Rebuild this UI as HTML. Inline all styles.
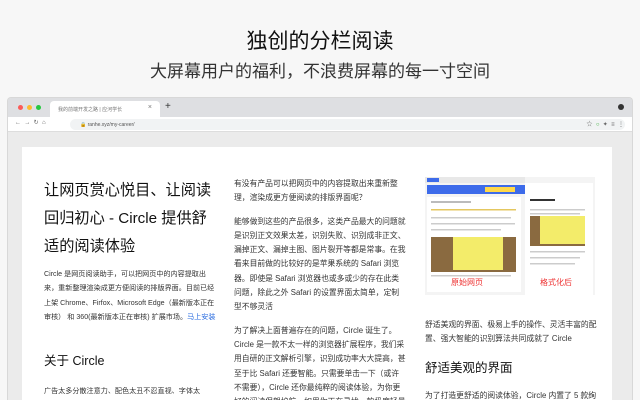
<!DOCTYPE html>
<html><head><meta charset="utf-8"><style>
*{margin:0;padding:0;box-sizing:border-box}
body{width:640px;height:400px;overflow:hidden;background:#f7f7f7;font-family:"Liberation Sans","Noto Sans CJK SC",sans-serif;color:#222;position:relative}
.t1{position:absolute;top:29px;left:0;width:640px;text-align:center;font-size:21px;line-height:26px;color:#111}
.t2{position:absolute;top:61px;left:0;width:640px;text-align:center;font-size:17px;line-height:22px;color:#333}
.win{position:absolute;left:7px;top:97px;width:626px;height:303px;background:#ebebeb;border-radius:4px 4px 0 0;overflow:hidden;border:1px solid #d8d8d8;border-bottom:none}
.tabs{height:19px;background:#dedfe2;position:relative}
.dot{position:absolute;top:7px;width:5px;height:5px;border-radius:50%}
.tab{position:absolute;left:42px;top:3px;width:110px;height:16px;background:#fff;border-radius:4px 4px 0 0;font-size:5px;color:#777;padding:5px 8px}
.addr{height:15px;background:#fff;position:relative;border-bottom:1px solid #ddd;font-size:6px;color:#666}
.url{position:absolute;left:62px;top:2px;width:555px;height:11px;background:#f1f3f4;border-radius:6px;font-size:5px;padding:3px 10px;color:#555}
.page{position:absolute;left:14px;top:49px;width:590px;height:260px;background:#fff;overflow:hidden}
.col{position:absolute;top:0;font-size:7.8px;line-height:14.3px;color:#333}
h1{font-size:15.2px;line-height:28px;font-weight:normal;color:#111}
h2{font-size:12.5px;line-height:20px;font-weight:normal;color:#111}
p{margin-bottom:9px}
a{color:#2b6de0;text-decoration:none}
</style></head><body>
<div class="t1">独创的分栏阅读</div>
<div class="t2">大屏幕用户的福利，不浪费屏幕的每一寸空间</div>
<div class="win">
<div class="tabs">
<div class="dot" style="left:10px;background:#fc5b57"></div>
<div class="dot" style="left:19px;background:#fdbb2f"></div>
<div class="dot" style="left:28px;background:#27c840"></div>
<div class="tab">我的前端开发之路 | 应河学长<span style="position:absolute;right:8px;top:3px;font-size:7px">×</span></div>
<div style="position:absolute;left:157px;top:3px;font-size:10px;color:#333">+</div>
<div style="position:absolute;right:8px;top:6px;width:6px;height:6px;border-radius:50%;background:#333"></div>
</div>
<div class="addr">
<span style="position:absolute;left:7px;top:2px">←&nbsp;&nbsp;→&nbsp;&nbsp;↻&nbsp;&nbsp;⌂</span>
<div class="url">🔒 ranhe.xyz/my-career/</div>
<span style="position:absolute;right:8px;top:2px">☆&nbsp;&nbsp;<span style="color:#3a3">○</span>&nbsp;&nbsp;✦&nbsp;&nbsp;≡&nbsp;&nbsp;⋮</span>
</div>
<div class="page">
<div class="col" style="left:22px;top:30px;width:176px;font-size:7.1px">
<h1 style="width:172px">让网页赏心悦目、让阅读回归初心 - Circle 提供舒适的阅读体验</h1>
<p style="margin-top:6px">Circle 是网页阅读助手，可以把网页中的内容提取出来，重新整理渲染成更方便阅读的排版界面。目前已经上架 Chrome、Firfox、Microsoft Edge（最新版本正在审核） 和 360(最新版本正在审核) 扩展市场。<a>马上安装</a></p>
<h2 style="margin-top:27px">关于 Circle</h2>
<p style="margin-top:13px">广告太多分散注意力、配色太丑不忍直视、字体太</p>
</div>
<div class="col" style="left:212px;top:30px;width:172px">
<p>有没有产品可以把网页中的内容提取出来重新整理，渲染成更方便阅读的排版界面呢？</p>
<p>能够做到这些的产品很多，这类产品最大的问题就是识别正文效果太差，识别失败、识别成非正文、漏掉正文、漏掉主图、图片裂开等都是常事。在我看来目前做的比较好的是苹果系统的 Safari 浏览器。即使是 Safari 浏览器也或多或少的存在此类问题，除此之外 Safari 的设置界面太简单，定制型不够灵活</p>
<p>为了解决上面普遍存在的问题，Circle 诞生了。Circle 是一款不太一样的浏览器扩展程序，我们采用自研的正文解析引擎，识别成功率大大提高，甚至于比 Safari 还要智能。只需要单击一下（或许不需要），Circle 还你最纯粹的阅读体验，为你更好的阅读保驾护航。如果你正在寻找一款极度轻量化</p>
</div>
<div class="col" style="left:403px;top:30px;width:172px">
<svg width="170" height="118" style="display:block;margin-bottom:23px">
<rect width="170" height="118" fill="#f4f4f4"/>
<rect x="0" y="0" width="100" height="6" fill="#e8e8e8"/>
<rect x="2" y="1" width="12" height="4" fill="#3d6bea"/>
<rect x="2" y="8" width="98" height="9" fill="#3d6bea"/>
<rect x="60" y="10" width="30" height="5" fill="#ffd84a"/>
<rect x="2" y="20" width="94" height="95" fill="#fff"/>
<rect x="6" y="24" width="40" height="2" fill="#bbb"/><rect x="6" y="32" width="85" height="1.5" fill="#e4c760"/>
<rect x="6" y="40" width="80" height="1.5" fill="#ccc"/><rect x="6" y="46" width="84" height="1.5" fill="#ccc"/><rect x="6" y="52" width="70" height="1.5" fill="#ccc"/>
<rect x="6" y="60" width="85" height="35" fill="#8a6a40"/>
<rect x="28" y="60" width="50" height="33" fill="#f3ec6a"/>
<rect x="6" y="98" width="80" height="1.5" fill="#ccc"/>
<rect x="100" y="6" width="68" height="112" fill="#fff"/>
<rect x="105" y="22" width="25" height="2" fill="#333"/>
<rect x="105" y="32" width="55" height="1.5" fill="#ccc"/><rect x="105" y="36" width="50" height="1.5" fill="#ccc"/>
<rect x="105" y="39" width="55" height="30" fill="#8a6a40"/>
<rect x="115" y="39" width="45" height="28" fill="#f3ec6a"/>
<rect x="105" y="74" width="55" height="1.5" fill="#ccc"/><rect x="105" y="80" width="50" height="1.5" fill="#ccc"/><rect x="105" y="86" width="45" height="1.5" fill="#ccc"/>
<text x="26" y="108" font-size="8" fill="#e33" font-family="Noto Sans CJK SC">原始网页</text>
<text x="115" y="108" font-size="8" fill="#e33" font-family="Noto Sans CJK SC">格式化后</text>
</svg>
<p>舒适美观的界面、极易上手的操作、灵活丰富的配置、强大智能的识别算法共同成就了 Circle</p>
<h2 style="margin-top:11px">舒适美观的界面</h2>
<p style="margin-top:11px">为了打造更舒适的阅读体验，Circle 内置了 5 款绚</p>
</div>
</div>
</div>
</body></html>
